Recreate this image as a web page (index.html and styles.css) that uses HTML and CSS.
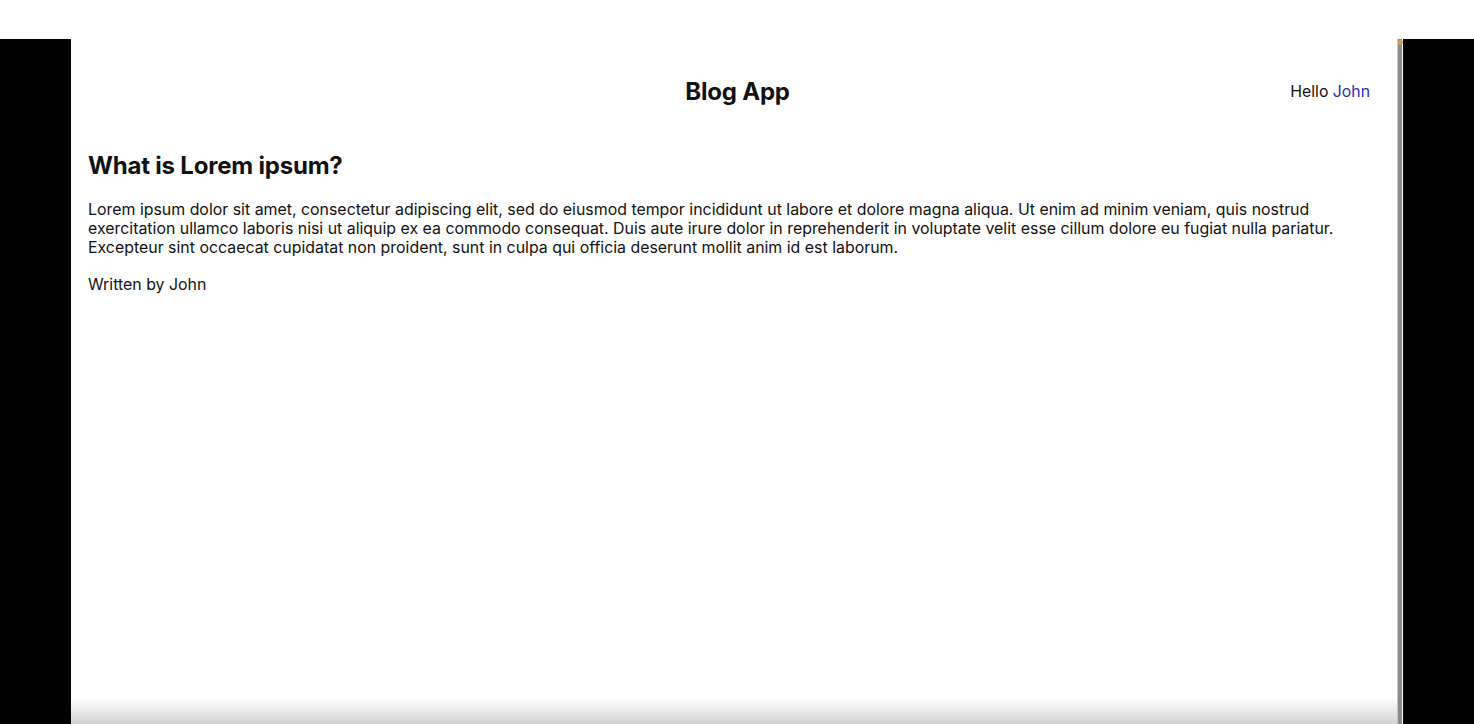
FILE: index.html
```html
<!DOCTYPE html>
<html>
<head>
<meta charset="utf-8">
<link rel="stylesheet" href="styles.css">
</head>
<body>
<div class="topband"></div>
<div class="stage">
  <div class="side-left"></div>
  <div class="window">
    <header class="navbar">
      <div class="nav-spacer"></div>
      <h1 class="brand">Blog App</h1>
      <div class="greeting">Hello <a class="user-link">John</a></div>
    </header>
    <main class="post">
      <h2 class="post-title">What is Lorem ipsum?</h2>
      <p class="post-body">Lorem ipsum dolor sit amet, consectetur adipiscing elit, sed do eiusmod tempor incididunt ut labore et dolore magna aliqua. Ut enim ad minim veniam, quis nostrud exercitation ullamco laboris nisi ut aliquip ex ea commodo consequat. Duis aute irure dolor in reprehenderit in voluptate velit esse cillum dolore eu fugiat nulla pariatur. Excepteur sint occaecat cupidatat non proident, sunt in culpa qui officia deserunt mollit anim id est laborum.</p>
      <p class="post-author">Written by John</p>
    </main>
    <div class="bottom-fade"></div>
  </div>
  <div class="scrollbar"><span class="scroll-dot"></span></div>
  <div class="side-right"></div>
</div>
</body>
</html>
```
FILE: styles.css
```css
html, body {
  margin: 0;
  padding: 0;
  height: 100%;
}
body {
  background: #000;
  font-family: Inter, "Noto Sans", "Liberation Sans", sans-serif;
  color: #111;
  overflow: hidden;
}
.topband {
  height: 39px;
  background: #fff;
}
.stage {
  display: flex;
  height: 685px;
}
.side-left {
  width: 71px;
  background: #000;
}
.window {
  width: 1326px;
  background: #fff;
  position: relative;
  display: flex;
  flex-direction: column;
}
.navbar {
  display: grid;
  grid-template-columns: 1fr auto 1fr;
  align-items: center;
  padding: 38px 27px 0 34px;
}
.brand {
  margin: 0;
  font-size: 24px;
  font-weight: 700;
  letter-spacing: -0.2px;
  line-height: 30px;
}
.greeting {
  justify-self: end;
  font-size: 15.8px;
  line-height: 30px;
}
.user-link {
  color: #2b2bb0;
  text-decoration: none;
}
.post {
  padding: 0 17px;
}
.post-title {
  margin: 44px 0 0;
  font-size: 24px;
  font-weight: 700;
  line-height: 30px;
  letter-spacing: -0.2px;
}
.post-body {
  margin: 19px 0 0;
  font-size: 15.9px;
  line-height: 19px;
}
.post-author {
  margin: 18px 0 0;
  font-size: 15.9px;
  line-height: 19px;
}
.bottom-fade {
  position: absolute;
  left: 0;
  right: 0;
  bottom: 0;
  height: 26px;
  background: linear-gradient(to bottom, rgba(210,210,210,0), rgba(210,210,210,1));
}
.scrollbar {
  width: 6px;
  background: #8a8a8a;
  border-left: 1px solid #c8c8c8;
  border-right: 1px solid #fff;
  box-sizing: border-box;
  position: relative;
}
.scroll-dot {
  position: absolute;
  top: 1px;
  left: 0;
  width: 5px;
  height: 5px;
  border-radius: 50%;
  background: #d4a04a;
}
.side-right {
  flex: 1;
  background: #000;
}
```
